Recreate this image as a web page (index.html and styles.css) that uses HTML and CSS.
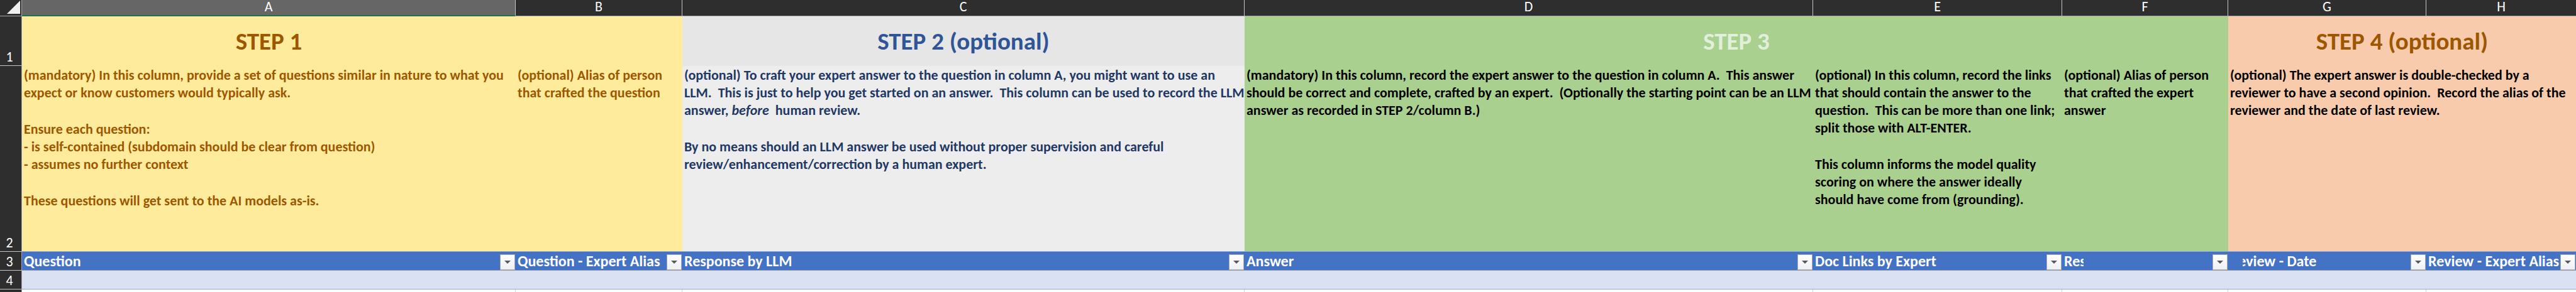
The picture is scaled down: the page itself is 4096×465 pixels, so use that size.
FILE: index.html
```html
<!DOCTYPE html>
<html lang="en">
<head>
<meta charset="utf-8">
<title>Expert question sheet</title>
<link rel="stylesheet" href="styles.css">
</head>
<body>
<table class="sheet">
  <colgroup>
    <col class="col-rows"><col class="col-a"><col class="col-b"><col class="col-c"><col class="col-d"><col class="col-e"><col class="col-f"><col class="col-g"><col class="col-h">
  </colgroup>
  <thead>
    <tr class="letters">
      <th class="corner"><svg class="corner-mark" viewBox="0 0 21 21" aria-hidden="true"><path d="M21 0V21H0Z" fill="#f0f0f0"/></svg></th>
      <th scope="col" class="selected">A</th>
      <th scope="col">B</th>
      <th scope="col">C</th>
      <th scope="col">D</th>
      <th scope="col">E</th>
      <th scope="col">F</th>
      <th scope="col">G</th>
      <th scope="col" class="last">H</th>
    </tr>
  </thead>
  <tbody>
    <tr class="steps">
      <th scope="row" class="row-number">1</th>
      <td class="step yellow">STEP 1</td>
      <td class="step yellow"></td>
      <td class="step gray">STEP 2 (optional)</td>
      <td class="step green" colspan="3">STEP 3</td>
      <td class="step peach" colspan="2">STEP 4 (optional)</td>
    </tr>
    <tr class="notes">
      <th scope="row" class="row-number">2</th>
      <td class="note yellow">
        <p>(mandatory) In this column, provide a set of questions similar in nature to what you<br>expect or know customers would typically ask.</p>
        <p>Ensure each question:<br>- is self-contained (subdomain should be clear from question)<br>- assumes no further context</p>
        <p>These questions will get sent to the AI models as-is.</p>
      </td>
      <td class="note yellow">
        <p>(optional) Alias of person<br>that crafted the question</p>
      </td>
      <td class="note light">
        <p>(optional) To craft your expert answer to the question in column A, you might want to use an<br>LLM.  This is just to help you get started on an answer.  This column can be used to record the LLM<br>answer, <em>before</em>  human review.</p>
        <p>By no means should an LLM answer be used without proper supervision and careful<br>review/enhancement/correction by a human expert.</p>
      </td>
      <td class="note green">
        <p>(mandatory) In this column, record the expert answer to the question in column A.  This answer<br>should be correct and complete, crafted by an expert.  (Optionally the starting point can be an LLM<br>answer as recorded in STEP 2/column B.)</p>
      </td>
      <td class="note green">
        <p>(optional) In this column, record the links<br>that should contain the answer to the<br>question.  This can be more than one link;<br>split those with ALT-ENTER.</p>
        <p>This column informs the model quality<br>scoring on where the answer ideally<br>should have come from (grounding).</p>
      </td>
      <td class="note green">
        <p>(optional) Alias of person<br>that crafted the expert<br>answer</p>
      </td>
      <td class="note peach" colspan="2">
        <p>(optional) The expert answer is double-checked by a<br>reviewer to have a second opinion.  Record the alias of the<br>reviewer and the date of last review.</p>
      </td>
    </tr>
    <tr class="fields">
      <th scope="row" class="row-number">3</th>
      <td class="field"><div class="field-bar"><span>Question</span><button class="filter" type="button" aria-label="Filter Question"></button></div></td>
      <td class="field"><div class="field-bar"><span>Question - Expert Alias</span><button class="filter" type="button" aria-label="Filter Question - Expert Alias"></button></div></td>
      <td class="field"><div class="field-bar"><span>Response by LLM</span><button class="filter" type="button" aria-label="Filter Response by LLM"></button></div></td>
      <td class="field"><div class="field-bar"><span>Answer</span><button class="filter" type="button" aria-label="Filter Answer"></button></div></td>
      <td class="field"><div class="field-bar"><span>Doc Links by Expert</span><button class="filter" type="button" aria-label="Filter Doc Links by Expert"></button></div></td>
      <td class="field"><div class="field-bar"><span class="cut-end">Res</span><button class="filter" type="button" aria-label="Filter column F"></button></div></td>
      <td class="field"><div class="field-bar"><span class="cut-start">Review - Date</span><button class="filter" type="button" aria-label="Filter Review - Date"></button></div></td>
      <td class="field"><div class="field-bar"><span>Review - Expert Alias</span><button class="filter" type="button" aria-label="Filter Review - Expert Alias"></button></div></td>
    </tr>
    <tr class="band">
      <th scope="row" class="row-number">4</th>
      <td></td><td></td><td></td><td></td><td></td><td></td><td></td><td></td>
    </tr>
    <tr class="blank">
      <th class="row-number"></th>
      <td></td><td></td><td></td><td></td><td></td><td></td><td></td><td></td>
    </tr>
  </tbody>
</table>
</body>
</html>
```
FILE: styles.css
```css
* {
  box-sizing: border-box;
}

body {
  margin: 0;
  background: #fff;
  font-family: Carlito, Calibri, Lato, "Open Sans", sans-serif;
  font-size: 22px;
}

.sheet {
  width: 100%;
  table-layout: fixed;
  border-collapse: separate;
  border-spacing: 0;
}

.sheet th,
.sheet td {
  padding: 0;
}

.col-rows { width: 35px; }
.col-a { width: 785px; }
.col-b { width: 265px; }
.col-c { width: 894px; }
.col-d { width: 904px; }
.col-e { width: 396px; }
.col-f { width: 264px; }
.col-g { width: 315px; }
.col-h { width: 238px; }

/* Column letters */
.letters th {
  height: 26px;
  padding-bottom: 2px;
  background: #2e2e2e;
  color: #fff;
  font-weight: 400;
  line-height: 22px;
  vertical-align: top;
  border-right: 1px solid #c6c6c6;
  border-bottom: 1px solid #a6a6a6;
}

.letters .last {
  border-right: 0;
}

.letters .selected {
  background: #666;
  border-bottom: 2px solid #217346;
}

.letters .corner {
  border-right-color: #a6a6a6;
}

.corner-mark {
  display: block;
  width: 21px;
  height: 21px;
  margin: 1px 2px 0 auto;
}

/* Row numbers */
.sheet .row-number {
  padding-right: 4px;
  background: #2e2e2e;
  color: #fff;
  font-weight: 400;
  line-height: 27px;
  vertical-align: bottom;
  border-right: 1px solid #a6a6a6;
}

.steps .row-number,
.fields .row-number,
.band .row-number {
  border-bottom: 1px solid #c6c6c6;
}

.fields .row-number {
  border-top: 1px solid #c6c6c6;
}

/* Step colours */
.yellow {
  background: #ffeb9c;
  color: #9c5700;
}

.gray {
  background: #e7e6e6;
  color: #2f5597;
}

.light {
  background: #ededed;
  color: #1f3864;
}

.green {
  background: #a9d08e;
  color: #000;
}

.peach {
  background: #f8cbad;
  color: #000;
}

.step {
  height: 79px;
  font-size: 39px;
  font-weight: 700;
  line-height: 48px;
  text-align: center;
  vertical-align: middle;
}

.step.green {
  color: #e2efda;
}

.step.peach {
  color: #9c5700;
}

.sheet .note {
  height: 295px;
  padding: 1px 0 0 3px;
  font-weight: 700;
  line-height: 28px;
  vertical-align: top;
  white-space: nowrap;
}

.note p {
  margin: 0 0 30px;
  white-space: pre;
}

/* Table header row with filters */
.field {
  height: 31px;
  background: #4472c4;
  color: #fff;
  font-size: 24px;
  font-weight: 700;
  line-height: 29px;
  white-space: nowrap;
  border-top: 1px solid #8ea9db;
  border-bottom: 1px solid #9a9ca6;
}

.field-bar {
  display: flex;
  justify-content: space-between;
  align-items: flex-end;
  padding: 0 1px 0 3px;
}

.cut-end {
  width: 31px;
  overflow: hidden;
}

.cut-start {
  margin-left: 20px;
  overflow: hidden;
  text-indent: -20px;
}

.filter {
  display: flex;
  flex: none;
  align-items: center;
  justify-content: center;
  width: 24px;
  height: 25px;
  padding: 0;
  border: 1px solid #ababab;
  background: linear-gradient(#fff, #eef0f4);
}

.filter::before {
  content: "";
  border: 5px solid transparent;
  border-top-color: #595959;
  border-bottom: 0;
}

.band td {
  height: 30px;
  background: #d9e1f2;
  border-bottom: 1px solid #8ea9db;
}

.blank td {
  height: 4px;
  border-right: 1px solid #d4d4d4;
}

.blank td:last-child {
  border-right: 0;
}
```
